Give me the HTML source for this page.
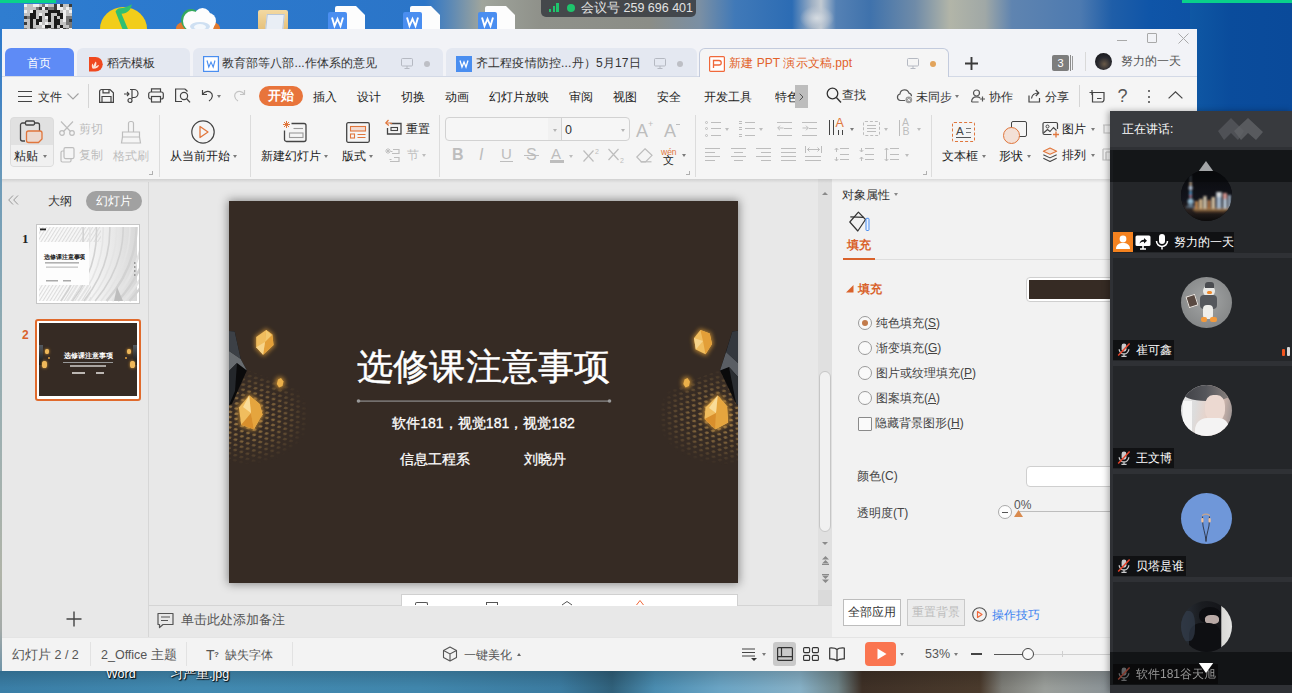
<!DOCTYPE html>
<html lang="zh">
<head>
<meta charset="utf-8">
<title>WPS</title>
<style>
*{box-sizing:border-box;margin:0;padding:0}
html,body{width:1292px;height:693px;overflow:hidden}
body{font-family:"Liberation Sans",sans-serif;font-size:12px;color:#333;position:relative;background:linear-gradient(180deg,#2a76c8 0,#2a6fb8 40%,#3d7aa8 75%,#4a86a8 100%)}
.a{position:absolute}
.t{position:absolute;white-space:nowrap;line-height:16px}
svg{position:absolute;overflow:visible}
#desk-top{left:0;top:0;width:1292px;height:30px;background:linear-gradient(90deg,#2f7dd0 0,#2c7ace 130px,#2b75c8 425px,#5f8ab4 452px,#a0a59c 482px,#8f918a 540px,#8b8d87 650px,#7a8fa4 700px,#4079b8 735px,#2c6cb4 792px,#9fb0c4 812px,#c2cad2 821px,#5581b4 836px,#3f72ac 870px,#6f8ba8 915px,#b2b5a8 950px,#a0a8a6 985px,#5f84b0 1012px,#4d7ab0 1080px,#1f5ea8 1112px,#0f55a8 1150px,#0a4a9c 1292px)}
#desk-bot{left:0;top:660px;width:1292px;height:33px;background:linear-gradient(180deg,rgba(0,0,0,.16) 10px,rgba(0,0,0,0) 28px),linear-gradient(90deg,#3a7ea6 0,#4189b0 200px,#4086ac 420px,#3b7ba0 560px,#30607a 612px,#4a8cb0 655px,#6aa4c4 720px,#86b0c6 800px,#6f8488 838px,#3e3026 862px,#4a3a2c 980px,#7c7c76 1002px,#9a9e9a 1045px,#8a9296 1110px)}
#win{left:2px;top:29px;width:1195px;height:642px;background:#f5f5f5;z-index:0}
#titlebar{left:0;top:0;width:1195px;height:48px;background:#f2f3f7}
#tabline{left:0;top:47px;width:1195px;height:1px;background:#d3d9e6;z-index:1}
#menurow{left:0;top:47px;width:1195px;height:36px;background:#f5f5f5}
#ribbon{left:0;top:83px;width:1195px;height:67px;background:#f5f5f5}
#ribline{left:0;top:150px;width:1195px;height:4px;background:linear-gradient(180deg,rgba(0,0,0,.1),rgba(0,0,0,0));z-index:2}
#leftp{left:0;top:150px;width:147px;height:458px;background:#e8e8e8}
#leftdiv{left:146px;top:153px;width:1px;height:455px;background:#d6d6d6}
#editor{left:147px;top:150px;width:669px;height:426px;background:#e8e8e8}
#vscroll{left:816px;top:150px;width:14px;height:426px;background:#e0e0e0}
#rightp{left:830px;top:150px;width:365px;height:458px;background:#f2f2f2}
#notes{left:147px;top:576px;width:683px;height:32px;background:#e8e8e8;border-top:1px solid #d4d4d4}
#status{left:0;top:608px;width:1195px;height:34px;background:#f3f3f3;border-top:1px solid #e4e4e4}
#meet{left:1110px;top:111px;width:182px;height:582px;background:#2b2d31}

#slide{left:227px;top:172px;width:509px;height:382px;background:#362b24;box-shadow:0 0 9px 1px rgba(0,0,0,.42);overflow:hidden}
#slide .w{color:#fff;position:absolute;white-space:nowrap;text-align:center}
#stitle{left:127.500px;width:254px;top:142px;font-size:36.3px;line-height:48px;-webkit-text-stroke:.45px #fff;display:flex;justify-content:space-between}
#stitle span{display:block;width:36.3px;text-align:center;flex:none}
#ssub{left:0;width:509px;top:212px;font-size:14px;line-height:20px;letter-spacing:.05px;-webkit-text-stroke:.3px #fff}

#meet{z-index:2;background:#2f3135;box-shadow:-2px 0 6px rgba(0,0,0,.3)}
#mhead{left:0;top:0;width:182px;height:36px;background:#383a3e}
.tile{position:absolute;left:3px;width:179px;height:103px;background:#242629}
.av{position:absolute;left:67.500px;top:19.500px;width:51px;height:51px;border-radius:50%;overflow:hidden}
.lab{position:absolute;left:0;top:82.500px;height:20px;background:#101113;color:#fff;font-size:12px;line-height:21px;padding-left:23px;padding-right:2px;white-space:nowrap}
.lab svg{left:3px;top:2px}

#ui{left:0;top:0;width:1292px;height:693px;z-index:1}
.tab{position:absolute;top:48px;height:28px;background:#e4e8f1;border-radius:6px 6px 0 0}
.g{color:#b9b9b9}
.ar{position:absolute;width:0;height:0;border-left:2.6px solid transparent;border-right:2.6px solid transparent;border-top:3.2px solid #7a7a7a}
.sep{position:absolute;width:1px;background:#dcdcdc}
</style>
</head>
<body>
<div class="a" id="desk-top"></div>
<div class="a" id="desk-bot"></div>
<div class="a" style="left:800px;top:6px;width:34px;height:22px;background:radial-gradient(ellipse at 50% 55%,rgba(214,220,226,.95) 0,rgba(190,200,212,.6) 40%,rgba(120,150,190,0) 72%)"></div>
<div class="a" style="left:0;top:29px;width:3px;height:642px;background:linear-gradient(180deg,#2b78cc 0,#3f82c4 60px,#6f9cb8 160px,#8eaab2 290px,#9fb0b0 420px,#b0b4a8 545px,#a4aaa8 600px,#6f94a8 642px)"></div>
<div class="a" style="left:1190px;top:0;width:102px;height:120px;background:linear-gradient(90deg,#0f58a4,#0a4c9c 40%,#0a4a9a)"></div>

<div class="a" id="deskitems" style="left:0;top:0;width:1292px;height:693px">
  <div class="a" style="left:0;top:0;width:56px;height:3px;background:#0ad18a"></div>
  <div class="a" style="left:1182px;top:0;width:110px;height:3px;background:#0ad18a"></div>
  <div class="a" style="left:541px;top:0;width:155px;height:17px;background:rgba(58,62,66,.88);border-radius:0 0 5px 5px"></div>
  <div class="a" style="left:549px;top:9px;width:2px;height:3px;background:#1ec46c"></div><div class="a" style="left:552.500px;top:6px;width:2px;height:6px;background:#1ec46c"></div><div class="a" style="left:556px;top:3px;width:2.500px;height:9px;background:#1ec46c"></div>
  <div class="a" style="left:567px;top:4px;width:8px;height:8px;border-radius:50%;background:#1ec46c"></div>
  <div class="t" style="left:581px;top:0;color:#e2e2e2;font-size:12.500px">会议号 259 696 401</div>
  <div class="a" style="left:24px;top:4px;width:48px;height:25px;background:#c2c2c2"></div><div class="a" style="left:24px;top:4px;width:3px;height:3px;background:#efefef"></div><div class="a" style="left:33px;top:4px;width:3px;height:3px;background:#efefef"></div><div class="a" style="left:36px;top:4px;width:3px;height:3px;background:#efefef"></div><div class="a" style="left:42px;top:4px;width:3px;height:3px;background:#777"></div><div class="a" style="left:45px;top:4px;width:3px;height:3px;background:#efefef"></div><div class="a" style="left:54px;top:4px;width:3px;height:3px;background:#3c3c3c"></div><div class="a" style="left:57px;top:4px;width:3px;height:3px;background:#efefef"></div><div class="a" style="left:60px;top:4px;width:3px;height:3px;background:#3c3c3c"></div><div class="a" style="left:69px;top:4px;width:3px;height:3px;background:#3c3c3c"></div><div class="a" style="left:36px;top:7px;width:3px;height:3px;background:#777"></div><div class="a" style="left:39px;top:7px;width:3px;height:3px;background:#3c3c3c"></div><div class="a" style="left:42px;top:7px;width:3px;height:3px;background:#efefef"></div><div class="a" style="left:45px;top:7px;width:3px;height:3px;background:#3c3c3c"></div><div class="a" style="left:48px;top:7px;width:3px;height:3px;background:#777"></div><div class="a" style="left:51px;top:7px;width:3px;height:3px;background:#777"></div><div class="a" style="left:54px;top:7px;width:3px;height:3px;background:#3c3c3c"></div><div class="a" style="left:57px;top:7px;width:3px;height:3px;background:#efefef"></div><div class="a" style="left:60px;top:7px;width:3px;height:3px;background:#efefef"></div><div class="a" style="left:66px;top:7px;width:3px;height:3px;background:#efefef"></div><div class="a" style="left:24px;top:10px;width:3px;height:3px;background:#efefef"></div><div class="a" style="left:30px;top:10px;width:3px;height:3px;background:#efefef"></div><div class="a" style="left:33px;top:10px;width:3px;height:3px;background:#1a1a1a"></div><div class="a" style="left:48px;top:10px;width:3px;height:3px;background:#1a1a1a"></div><div class="a" style="left:51px;top:10px;width:3px;height:3px;background:#1a1a1a"></div><div class="a" style="left:54px;top:10px;width:3px;height:3px;background:#1a1a1a"></div><div class="a" style="left:57px;top:10px;width:3px;height:3px;background:#1a1a1a"></div><div class="a" style="left:63px;top:10px;width:3px;height:3px;background:#efefef"></div><div class="a" style="left:69px;top:10px;width:3px;height:3px;background:#efefef"></div><div class="a" style="left:30px;top:13px;width:3px;height:3px;background:#1a1a1a"></div><div class="a" style="left:33px;top:13px;width:3px;height:3px;background:#1a1a1a"></div><div class="a" style="left:39px;top:13px;width:3px;height:3px;background:#efefef"></div><div class="a" style="left:45px;top:13px;width:3px;height:3px;background:#1a1a1a"></div><div class="a" style="left:48px;top:13px;width:3px;height:3px;background:#1a1a1a"></div><div class="a" style="left:57px;top:13px;width:3px;height:3px;background:#1a1a1a"></div><div class="a" style="left:60px;top:13px;width:3px;height:3px;background:#1a1a1a"></div><div class="a" style="left:63px;top:13px;width:3px;height:3px;background:#efefef"></div><div class="a" style="left:24px;top:16px;width:3px;height:3px;background:#3c3c3c"></div><div class="a" style="left:27px;top:16px;width:3px;height:3px;background:#777"></div><div class="a" style="left:30px;top:16px;width:3px;height:3px;background:#1a1a1a"></div><div class="a" style="left:33px;top:16px;width:3px;height:3px;background:#1a1a1a"></div><div class="a" style="left:39px;top:16px;width:3px;height:3px;background:#1a1a1a"></div><div class="a" style="left:45px;top:16px;width:3px;height:3px;background:#efefef"></div><div class="a" style="left:48px;top:16px;width:3px;height:3px;background:#1a1a1a"></div><div class="a" style="left:54px;top:16px;width:3px;height:3px;background:#1a1a1a"></div><div class="a" style="left:60px;top:16px;width:3px;height:3px;background:#1a1a1a"></div><div class="a" style="left:63px;top:16px;width:3px;height:3px;background:#efefef"></div><div class="a" style="left:66px;top:16px;width:3px;height:3px;background:#777"></div><div class="a" style="left:69px;top:16px;width:3px;height:3px;background:#777"></div><div class="a" style="left:30px;top:19px;width:3px;height:3px;background:#1a1a1a"></div><div class="a" style="left:36px;top:19px;width:3px;height:3px;background:#1a1a1a"></div><div class="a" style="left:39px;top:19px;width:3px;height:3px;background:#1a1a1a"></div><div class="a" style="left:48px;top:19px;width:3px;height:3px;background:#1a1a1a"></div><div class="a" style="left:54px;top:19px;width:3px;height:3px;background:#1a1a1a"></div><div class="a" style="left:57px;top:19px;width:3px;height:3px;background:#1a1a1a"></div><div class="a" style="left:63px;top:19px;width:3px;height:3px;background:#efefef"></div><div class="a" style="left:66px;top:19px;width:3px;height:3px;background:#777"></div><div class="a" style="left:69px;top:19px;width:3px;height:3px;background:#3c3c3c"></div><div class="a" style="left:24px;top:22px;width:3px;height:3px;background:#3c3c3c"></div><div class="a" style="left:30px;top:22px;width:3px;height:3px;background:#1a1a1a"></div><div class="a" style="left:36px;top:22px;width:3px;height:3px;background:#1a1a1a"></div><div class="a" style="left:39px;top:22px;width:3px;height:3px;background:#efefef"></div><div class="a" style="left:45px;top:22px;width:3px;height:3px;background:#efefef"></div><div class="a" style="left:54px;top:22px;width:3px;height:3px;background:#1a1a1a"></div><div class="a" style="left:57px;top:22px;width:3px;height:3px;background:#1a1a1a"></div><div class="a" style="left:66px;top:22px;width:3px;height:3px;background:#777"></div><div class="a" style="left:69px;top:22px;width:3px;height:3px;background:#777"></div><div class="a" style="left:30px;top:25px;width:3px;height:3px;background:#1a1a1a"></div><div class="a" style="left:42px;top:25px;width:3px;height:3px;background:#efefef"></div><div class="a" style="left:45px;top:25px;width:3px;height:3px;background:#1a1a1a"></div><div class="a" style="left:48px;top:25px;width:3px;height:3px;background:#1a1a1a"></div><div class="a" style="left:54px;top:25px;width:3px;height:3px;background:#1a1a1a"></div><div class="a" style="left:60px;top:25px;width:3px;height:3px;background:#1a1a1a"></div><div class="a" style="left:69px;top:25px;width:3px;height:3px;background:#777"></div><div class="a" style="left:24px;top:28px;width:3px;height:3px;background:#777"></div><div class="a" style="left:30px;top:28px;width:3px;height:3px;background:#3c3c3c"></div><div class="a" style="left:33px;top:28px;width:3px;height:3px;background:#777"></div><div class="a" style="left:45px;top:28px;width:3px;height:3px;background:#777"></div><div class="a" style="left:51px;top:28px;width:3px;height:3px;background:#777"></div><div class="a" style="left:54px;top:28px;width:3px;height:3px;background:#3c3c3c"></div><div class="a" style="left:57px;top:28px;width:3px;height:3px;background:#777"></div><div class="a" style="left:60px;top:28px;width:3px;height:3px;background:#efefef"></div><div class="a" style="left:63px;top:28px;width:3px;height:3px;background:#3c3c3c"></div><div class="a" style="left:66px;top:28px;width:3px;height:3px;background:#777"></div><div class="a" style="left:69px;top:28px;width:3px;height:3px;background:#efefef"></div>
  <div class="a" style="left:100px;top:7px;width:47px;height:44px;border-radius:50%;background:#f2cd1a"></div><svg width="22" height="26" viewBox="113 3 22 26" style="left:113px;top:3px"><path d="M115.500 11.500c1-2 2.500-3 4.500-3.300 3-.4 7-1 12-4-1 4-2.500 7-6 8.500-1.500.6-3 .9-4.500 1l6.500 15.500h-5.500z" fill="#2fbf71"/></svg>
  <div class="a" style="left:176px;top:19px;width:44px;height:18px;border-radius:50% 50% 0 0;background:#e07a30"></div><div class="a" style="left:183px;top:11px;width:18px;height:20px;border-radius:50%;background:#fdfdfd;box-shadow:-1px -1px 0 1px #35a85c"></div><div class="a" style="left:194px;top:8px;width:17px;height:18px;border-radius:50%;background:#fdfdfd"></div><div class="a" style="left:201px;top:13px;width:15px;height:16px;border-radius:50%;background:#fdfdfd"></div><div class="a" style="left:186px;top:18px;width:28px;height:14px;border-radius:40%;background:#fdfdfd"></div><div class="a" style="left:190px;top:22px;width:20px;height:9px;border-radius:50%;background:#cfe0f2"></div><div class="a" style="left:194px;top:24px;width:12px;height:6px;border-radius:50%;background:#f4f8fc"></div>
  <div class="a" style="left:258px;top:10px;width:30px;height:20px;background:linear-gradient(180deg,#f3d9a2,#e5c07a);border-radius:2px"></div><div class="a" style="left:266px;top:14px;width:18px;height:16px;background:#e9eef5;border:1px solid #b9c6d8;transform:skewX(-6deg)"></div>
  <div class="a" style="left:335px;top:6px;width:30px;height:24px;background:#fdfdfd;border-radius:2px 0 0 0;clip-path:polygon(0 0,70% 0,100% 38%,100% 100%,0 100%)"></div><div class="a" style="left:328px;top:12px;width:19px;height:18px;background:#4a8ef0;border-radius:2px 2px 0 0"></div><svg width="13" height="10" viewBox="0 0 13 10" style="left:331px;top:17px"><path d="M1 .5l2.500 8.500 3-7 3 7L12 .5" fill="none" stroke="#fff" stroke-width="1.900"/></svg>
  <div class="a" style="left:410px;top:6px;width:30px;height:24px;background:#fdfdfd;border-radius:2px 0 0 0;clip-path:polygon(0 0,70% 0,100% 38%,100% 100%,0 100%)"></div><div class="a" style="left:403px;top:12px;width:19px;height:18px;background:#4a8ef0;border-radius:2px 2px 0 0"></div><svg width="13" height="10" viewBox="0 0 13 10" style="left:406px;top:17px"><path d="M1 .5l2.500 8.500 3-7 3 7L12 .5" fill="none" stroke="#fff" stroke-width="1.900"/></svg>
  <div class="a" style="left:485px;top:6px;width:30px;height:24px;background:#fdfdfd;border-radius:2px 0 0 0;clip-path:polygon(0 0,70% 0,100% 38%,100% 100%,0 100%)"></div><div class="a" style="left:478px;top:12px;width:19px;height:18px;background:#4a8ef0;border-radius:2px 2px 0 0"></div><svg width="13" height="10" viewBox="0 0 13 10" style="left:481px;top:17px"><path d="M1 .5l2.500 8.500 3-7 3 7L12 .5" fill="none" stroke="#fff" stroke-width="1.900"/></svg>
  <div class="t" style="left:106px;top:666px;color:#fff;font-size:12.500px;text-shadow:1px 1px 1px #000,0 0 2px #000">Word</div>
  <div class="t" style="left:170px;top:666px;color:#fff;font-size:12.500px;text-shadow:1px 1px 1px #000,0 0 2px #000">习严重.jpg</div>
</div>

<div class="a" id="win">
  <div class="a" id="titlebar"></div>
  <div class="a" id="tabline"></div>
  <div class="a" id="menurow"></div>
  <div class="a" id="ribbon"></div>
  <div class="a" id="ribline"></div>
  <div class="a" id="leftp"></div>
  <div class="a" id="leftdiv"></div>
  <div class="a" id="editor"></div>
  
  <div class="a" id="slide">
    <svg width="509" height="382" viewBox="0 0 509 382" style="left:0;top:0">
      <defs>
        <pattern id="dots" width="6.4" height="10" patternUnits="userSpaceOnUse" patternTransform="rotate(17) skewX(-20)">
          <ellipse cx="1.6" cy="1.4" rx="1.95" ry="1.3" fill="#b0894c"/>
          <ellipse cx="4.8" cy="6.4" rx="1.95" ry="1.3" fill="#b0894c"/>
        </pattern>
        <pattern id="dots2" width="6.4" height="10" patternUnits="userSpaceOnUse" patternTransform="rotate(-17) skewX(20)">
          <ellipse cx="1.6" cy="1.4" rx="1.95" ry="1.3" fill="#b0894c"/>
          <ellipse cx="4.8" cy="6.4" rx="1.95" ry="1.3" fill="#b0894c"/>
        </pattern>
        <radialGradient id="fadeL" cx="16" cy="216" r="68" gradientUnits="userSpaceOnUse" gradientTransform="translate(16 216) scale(1 .74) translate(-16 -216)">
          <stop offset="0" stop-color="#fff" stop-opacity=".9"/><stop offset=".5" stop-color="#fff" stop-opacity=".55"/><stop offset=".95" stop-color="#fff" stop-opacity="0"/>
        </radialGradient>
        <radialGradient id="fadeR" cx="493" cy="216" r="68" gradientUnits="userSpaceOnUse" gradientTransform="translate(493 216) scale(1 .74) translate(-493 -216)">
          <stop offset="0" stop-color="#fff" stop-opacity=".9"/><stop offset=".5" stop-color="#fff" stop-opacity=".55"/><stop offset=".95" stop-color="#fff" stop-opacity="0"/>
        </radialGradient>
        <mask id="mL"><polygon points="0,166 16,168 90,196 60,280 0,270" fill="url(#fadeL)"/></mask>
        <mask id="mR"><polygon points="509,166 493,168 419,196 449,280 509,270" fill="url(#fadeR)"/></mask>
        <filter id="glow" x="-50%" y="-50%" width="200%" height="200%"><feGaussianBlur stdDeviation="2.2"/></filter>
      </defs>
      <rect x="0" y="160" width="95" height="125" fill="url(#dots)" mask="url(#mL)"/>
      <rect x="414" y="160" width="95" height="125" fill="url(#dots2)" mask="url(#mR)"/>
      <!-- left crystal -->
      <polygon points="0,130 5.7,130.6 11.7,158 17.9,169.4 2.9,203 0,204" fill="#0a0a0b"/>
      <polygon points="0,130 5.7,130.6 11.7,158 0,150" fill="#3c4046"/>
      <polygon points="0,150 11.7,158 17.9,169.4 8,162 0,170" fill="#686c70"/>
      <polygon points="0,170 8,162 6,190 0,204" fill="#24272b"/>
      <!-- right crystal -->
      <polygon points="509,129.7 503.3,130.6 491,169.4 507.2,203 509,203.6" fill="#0a0a0b"/>
      <polygon points="509,129.7 503.3,130.6 497,151 509,162" fill="#34383e"/>
      <polygon points="497,151 509,162 509,176 500,166 491,169.4" fill="#5a5e64"/>
      <polygon points="500,166 509,176 509,203.6 507.2,203" fill="#2a2d31"/>
      <!-- gems glow -->
      <g filter="url(#glow)" fill="#d99a35" opacity=".75">
        <polygon points="26,135.5 37,127.5 44.5,133 46,144.5 34.5,155.5 26,147"/>
        <ellipse cx="51" cy="181.7" rx="5" ry="6"/>
        <polygon points="8.5,206 20,192.5 32,202 35,213.5 25.5,230 11,225"/>
        <polygon points="463.5,137 471,127.5 482,131.5 484.5,143 477,155 465.5,149.5"/>
        <ellipse cx="457.6" cy="181.7" rx="5" ry="6"/>
        <polygon points="475,206 488.7,192.5 499.5,204.5 500.5,222 486.5,230 474,218.5"/>
      </g>
      <!-- gems -->
      <polygon points="27.2,135.9 37.1,129 43.3,133.6 44.5,144 34.1,153.7 27.2,146.3" fill="#f0bd5e"/>
      <polygon points="37.1,129 43.3,133.6 44.5,144 34.1,153.7 36,141" fill="#e39f38"/>
      <polygon points="27.2,146.3 36,141 34.1,153.7" fill="#f7d48a"/>
      <polygon points="36,141 43,134 37.1,129" fill="#f3c86e"/>
      <polygon points="49,178.5 52,177 54.5,180.5 53.5,185 50,186.5 47.8,183" fill="#eab04a"/>
      <polygon points="9.9,206.4 20.2,194.4 30.6,202.9 33.4,213.3 24.9,228.3 12.2,223.7" fill="#f0bd5e"/>
      <polygon points="20.2,194.4 30.6,202.9 33.4,213.3 24.9,228.3 22,212" fill="#e5a53e"/>
      <polygon points="20.2,194.4 22,212 14,206" fill="#f9dc98"/>
      <polygon points="12.2,223.7 22,212 24.9,228.3" fill="#d98f2c"/>
      <polygon points="465,137.1 471.4,129 480.7,132.5 483,142.9 476.5,153.3 466.8,148.6" fill="#f0bd5e"/>
      <polygon points="471.4,129 480.7,132.5 483,142.9 476.5,153.3 474,140" fill="#e39f38"/>
      <polygon points="465,137.1 474,140 466.8,148.6" fill="#f7d48a"/>
      <polygon points="455.5,178.5 458.5,177 461,180.5 460,185 456.5,186.5 454.3,183" fill="#eab04a"/>
      <polygon points="476.5,206.4 488.7,194.4 498,205.2 499.1,221.4 486.4,228.3 475.6,217.9" fill="#f0bd5e"/>
      <polygon points="488.7,194.4 498,205.2 499.1,221.4 486.4,228.3 487,212" fill="#e5a53e"/>
      <polygon points="488.7,194.4 487,212 480,207" fill="#f9dc98"/>
      <polygon points="475.6,217.9 487,212 486.4,228.3" fill="#d98f2c"/>
      <!-- divider -->
      <rect x="129" y="199.5" width="252" height="1.2" fill="#8e8e8e"/>
      <circle cx="129.5" cy="200" r="1.8" fill="#9a9a9a"/><circle cx="380.5" cy="200" r="1.8" fill="#9a9a9a"/>
    </svg>
    <div class="w" id="stitle"><span>选</span><span>修</span><span>课</span><span>注</span><span>意</span><span>事</span><span>项</span></div>
    <div class="w" id="ssub">软件181，视觉181，视觉182</div>
    <div class="w" style="left:171px;top:248px;font-size:14px;line-height:20px;-webkit-text-stroke:.25px #fff">信息工程系</div>
    <div class="w" style="left:295px;top:248px;font-size:14px;line-height:20px;-webkit-text-stroke:.25px #fff">刘晓丹</div>
  </div>
  <div class="a" id="vscroll"></div>
  <div class="a" id="rightp"></div>
  <div class="a" id="notes"></div>
  <div class="a" id="status"></div>
</div>



<div class="a" id="ui">
  <!-- window controls -->
  <div class="a" style="left:1117px;top:40px;width:10px;height:1px;background:#a9a9a9"></div>
  <div class="a" style="left:1147px;top:33px;width:10px;height:10px;border:1px solid #a9a9a9;border-radius:1px"></div>
  <svg width="11" height="11" viewBox="0 0 11 11" style="left:1178px;top:33px"><path d="M.5.5l10 10M10.500.5l-10 10" stroke="#a9a9a9" stroke-width="1"/></svg>
  <!-- tabs -->
  <div class="tab" style="left:5px;width:69px;background:#5e8bf6"></div>
  <div class="t" style="left:27px;top:55px;color:#fff">首页</div>
  <div class="tab" style="left:77px;width:113px"></div>
  <svg width="14" height="15" viewBox="0 0 14 15" style="left:89px;top:57px"><path d="M0 0h6.500a7 7 0 0 1 0 14.500H0z" fill="#f0491f"/><path d="M3.800 11.800c-1.300-1.800-1.300-3.800-.4-5.300.9.900 1.300 2 1.200 3.300.2-2.300.9-4 2.300-5.300.9 1.600.6 3.800-.6 5.600 1-1.300 2.300-2 3.700-2.200-.3 2.200-2.300 3.900-6.200 3.900z" fill="#fde3d6"/></svg>
  <div class="t" style="left:107px;top:55px">稻壳模板</div>
  <div class="tab" style="left:193px;width:250px"></div>
  <svg width="16" height="16" viewBox="0 0 16 16" style="left:203px;top:56px"><rect x=".6" y=".6" width="14.800" height="14.800" fill="#fff" stroke="#4a8ef0" stroke-width="1.200"/><path d="M4 4.500l1.800 6.500 2.200-5 2.200 5L12 4.500" fill="none" stroke="#4a8ef0" stroke-width="1.100"/></svg>
  <div class="t" style="left:222px;top:55px;letter-spacing:.08px">教育部等八部...作体系的意见</div>
  <svg width="12" height="11" viewBox="0 0 12 11" style="left:401px;top:58px"><rect x=".5" y=".5" width="11" height="7.500" rx="1" fill="none" stroke="#b5b9c2"/><path d="M6 8v2.500M3.500 10.500h5" stroke="#b5b9c2" fill="none"/></svg>
  <div class="a" style="left:424px;top:61px;width:6px;height:6px;border-radius:50%;background:#bdbfc5"></div>
  <div class="tab" style="left:446px;width:251px"></div>
  <svg width="16" height="16" viewBox="0 0 16 16" style="left:456px;top:56px"><rect width="16" height="16" fill="#4a8ef0"/><path d="M4 4.500l2 6.500 2-5 2 5 2-6.500" fill="none" stroke="#fff" stroke-width="1.300"/></svg>
  <div class="t" style="left:476px;top:55px;letter-spacing:.16px">齐工程疫情防控...丹）5月17日</div>
  <svg width="12" height="11" viewBox="0 0 12 11" style="left:654px;top:58px"><rect x=".5" y=".5" width="11" height="7.500" rx="1" fill="none" stroke="#b5b9c2"/><path d="M6 8v2.500M3.500 10.500h5" stroke="#b5b9c2" fill="none"/></svg>
  <div class="a" style="left:677px;top:61px;width:6px;height:6px;border-radius:50%;background:#bdbfc5"></div>
  <div class="tab" style="left:699px;width:250px;height:29px;background:#f5f5f5;border:1px solid #c3cbdd;border-bottom:none"></div>
  <svg width="16" height="16" viewBox="0 0 16 16" style="left:709px;top:56px"><rect x=".6" y=".6" width="14.800" height="14.800" rx="1" fill="#fff" stroke="#f0683a" stroke-width="1.200"/><path d="M4.500 12V4.500h5.500a2 2 0 0 1 0 4.500H4.500" fill="none" stroke="#f0683a" stroke-width="1.300"/></svg>
  <div class="t" style="left:729px;top:55px;color:#e2622a;font-size:12px;letter-spacing:.1px">新建 PPT 演示文稿.ppt</div>
  <svg width="12" height="11" viewBox="0 0 12 11" style="left:907px;top:58px"><rect x=".5" y=".5" width="11" height="7.500" rx="1" fill="none" stroke="#b5b9c2"/><path d="M6 8v2.500M3.500 10.500h5" stroke="#b5b9c2" fill="none"/></svg>
  <div class="a" style="left:930px;top:61px;width:6px;height:6px;border-radius:50%;background:#e2a45c"></div>
  <svg width="13" height="13" viewBox="0 0 13 13" style="left:965px;top:56.500px"><path d="M6.500 0v13M0 6.500h13" stroke="#3a3a3a" stroke-width="1.900"/></svg>
  <div class="a" style="left:1052px;top:55px;width:17px;height:16px;background:#7d7d7d;border-radius:2px;color:#fff;font-size:11px;line-height:16px;text-align:center">3</div>
  <div class="a" style="left:1070px;top:55px;width:1px;height:16px;background:#8a8a8a"></div>
  <div class="a" style="left:1072px;top:56px;width:1px;height:14px;background:#9a9a9a"></div>
  <div class="sep" style="left:1085px;top:52px;height:19px;background:#d9d9d9"></div>
  <div class="a" style="left:1095px;top:53px;width:17px;height:17px;border-radius:50%;background:radial-gradient(circle at 55% 65%,#6a5a48 0,#2a2a30 45%,#0c0d10 100%)"></div>
  <div class="t" style="left:1121px;top:53px;color:#555">努力的一天</div>

  <!-- menu row -->
  <div class="a" style="left:18px;top:90.5px;width:14px;height:1.2px;background:#444"></div>
  <div class="a" style="left:18px;top:95.5px;width:14px;height:1.2px;background:#444"></div>
  <div class="a" style="left:18px;top:100.5px;width:14px;height:1.2px;background:#444"></div>
  <div class="t" style="left:38px;top:89px;">文件</div>
  <svg width="12" height="7" viewBox="0 0 12 7" style="left:67px;top:93px"><path d="M.5.5l5.500 5.500 5.500-5.500" fill="none" stroke="#a2a2a2" stroke-width="1.100"/></svg>
  <div class="sep" style="left:88px;top:84px;height:24px;background:#d5d5d5"></div>
  <svg width="15" height="14" viewBox="0 0 15 14" style="left:99px;top:89px"><path d="M.6 2.500a2 2 0 0 1 2-2h8.400l3.400 3.200v9.700H.6z" fill="none" stroke="#444" stroke-width="1.200"/><path d="M3 13V7.500h9V13M4 .8v3h6V.8" fill="none" stroke="#444" stroke-width="1.200"/></svg>
  <svg width="15" height="16" viewBox="0 0 15 16" style="left:124px;top:88px"><path d="M6 1.500h4a4 4 0 0 1 0 8H8" fill="none" stroke="#444" stroke-width="1.200"/><path d="M8 1.500v9.500" stroke="#444" stroke-width="1.200"/><circle cx="6" cy="12.500" r="2" fill="none" stroke="#444" stroke-width="1.200"/><path d="M0 6h5M3 4l2 2-2 2" fill="none" stroke="#444" stroke-width="1.100"/></svg>
  <svg width="16" height="15" viewBox="0 0 16 15" style="left:148px;top:88px"><path d="M3.500 4V.8h9V4" fill="none" stroke="#444" stroke-width="1.200"/><rect x=".7" y="4" width="14.600" height="7" rx="2" fill="none" stroke="#444" stroke-width="1.200"/><rect x="3.500" y="8.500" width="9" height="5.500" fill="#f5f5f5" stroke="#444" stroke-width="1.200"/></svg>
  <svg width="17" height="16" viewBox="0 0 17 16" style="left:174px;top:88px"><path d="M11 1H1.600v12.500H8" fill="none" stroke="#444" stroke-width="1.200"/><path d="M11 1l2.500 2.500" stroke="#444" stroke-width="1.200"/><circle cx="10" cy="8" r="3.600" fill="none" stroke="#444" stroke-width="1.200"/><path d="M12.700 10.800l3.300 3.600" stroke="#444" stroke-width="1.300"/></svg>
  <svg width="13" height="13" viewBox="0 0 13 13" style="left:201px;top:89px"><path d="M1.500 1v4.500h4.500" fill="none" stroke="#444" stroke-width="1.200"/><path d="M1.800 5.200C3.500 2.500 7 1.500 9.500 3.200c2.600 1.800 2.800 6-1.500 8.800" fill="none" stroke="#444" stroke-width="1.200"/></svg>
  <div class="ar" style="left:217px;top:94.5px"></div>
  <svg width="13" height="13" viewBox="0 0 13 13" style="left:233px;top:89px"><path d="M11.500 1v4.500H7" fill="none" stroke="#c4c4c4" stroke-width="1.200"/><path d="M11.200 5.200C9.500 2.500 6 1.500 3.500 3.200.9 5 .7 9.200 5 12" fill="none" stroke="#c4c4c4" stroke-width="1.200"/></svg>
  <div class="a" style="left:259px;top:86px;width:44px;height:20px;border-radius:10px;background:#e8743b;color:#fff;font-weight:bold;font-size:12.500px;line-height:20px;text-align:center">开始</div>
  <div class="t" style="left:313px;top:89px;color:#222">插入</div>
  <div class="t" style="left:357px;top:89px;color:#222">设计</div>
  <div class="t" style="left:401px;top:89px;color:#222">切换</div>
  <div class="t" style="left:445px;top:89px;color:#222">动画</div>
  <div class="t" style="left:489px;top:89px;color:#222">幻灯片放映</div>
  <div class="t" style="left:569px;top:89px;color:#222">审阅</div>
  <div class="t" style="left:613px;top:89px;color:#222">视图</div>
  <div class="t" style="left:657px;top:89px;color:#222">安全</div>
  <div class="t" style="left:704px;top:89px;color:#222">开发工具</div>
  <div class="t" style="left:775px;top:89px;color:#222;width:20px;overflow:hidden">特色</div>
  <div class="a" style="left:795px;top:85px;width:13px;height:23px;background:#bdbdbd"></div>
  <svg width="5" height="8" viewBox="0 0 5 8" style="left:799px;top:92.500px"><path d="M.7.700l3.300 3.300-3.300 3.300" fill="none" stroke="#555" stroke-width="1"/></svg>
  <svg width="16" height="16" viewBox="0 0 16 16" style="left:826px;top:87px"><circle cx="6.500" cy="6.500" r="5.300" fill="none" stroke="#333" stroke-width="1.300"/><path d="M10.400 10.600l4.600 4.800" stroke="#333" stroke-width="1.400"/></svg>
  <div class="t" style="left:842px;top:87px;">查找</div>
  <svg width="18" height="15" viewBox="0 0 18 15" style="left:896px;top:89px"><path d="M9 11.500H4.500a3.300 3.300 0 0 1-.5-6.500 4.600 4.600 0 0 1 9-.8 3.200 3.200 0 0 1 2.500 3" fill="none" stroke="#555" stroke-width="1.200"/><circle cx="12.800" cy="10.800" r="3.400" fill="#9a9a9a"/><path d="M11.500 9.500l2.600 2.600M14.100 9.500l-2.600 2.600" stroke="#f5f5f5" stroke-width="1"/></svg>
  <div class="t" style="left:916px;top:89px;">未同步</div>
  <div class="ar" style="left:955px;top:94.5px"></div>
  <svg width="15" height="14" viewBox="0 0 15 14" style="left:971px;top:89px"><circle cx="5.500" cy="4" r="3" fill="none" stroke="#555" stroke-width="1.200"/><path d="M.6 13c0-3.500 2-5.200 5-5.200 1.500 0 2.700.4 3.500 1.200M.6 13h7" fill="none" stroke="#555" stroke-width="1.200"/><path d="M11.500 7.500v5M9 10h5" stroke="#555" stroke-width="1.200"/></svg>
  <div class="t" style="left:989px;top:89px;">协作</div>
  <svg width="16" height="14" viewBox="0 0 16 14" style="left:1026px;top:89px"><path d="M3 6.500V13h10.500V9" fill="none" stroke="#444" stroke-width="1.200"/><path d="M5.500 9.500c.5-3.500 3-5.500 7-5.500M9.800 1l3 3-3 3" fill="none" stroke="#444" stroke-width="1.200"/></svg>
  <div class="t" style="left:1045px;top:89px;">分享</div>
  <div class="sep" style="left:1079px;top:85px;height:22px;background:#d5d5d5"></div>
  <svg width="16" height="14" viewBox="0 0 16 14" style="left:1089px;top:89px"><path d="M3.500 3.500h11.500v7c0 1.500-1 2.500-2.500 2.500H3.500z" fill="none" stroke="#444" stroke-width="1.200"/><path d="M.5 3.500h5M3 1v5M8 9.500h4.500" stroke="#444" stroke-width="1.200" fill="none"/></svg>
  <div class="t" style="left:1117.500px;top:85px;font-size:18px;line-height:22px;color:#555">?</div>
  <div class="a" style="left:1148px;top:90px;width:2px;height:2px;background:#444;border-radius:50%"></div>
  <div class="a" style="left:1148px;top:95.5px;width:2px;height:2px;background:#444;border-radius:50%"></div>
  <div class="a" style="left:1148px;top:101px;width:2px;height:2px;background:#444;border-radius:50%"></div>
  <svg width="15" height="8" viewBox="0 0 15 8" style="left:1168px;top:91px"><path d="M.6 7.400L7.500.8l6.900 6.600" fill="none" stroke="#444" stroke-width="1.200"/></svg>

  <!-- ribbon -->
  <div class="a" style="left:10px;top:117px;width:44px;height:50px;background:#e1e1e1;border:1px solid #dcdcdc;border-radius:4px"></div>
  <div class="a" style="left:11px;top:145px;width:42px;height:21px;background:#f0f0f0;border-radius:0 0 3px 3px"></div>
  <svg width="24" height="24" viewBox="0 0 24 24" style="left:19px;top:120px"><path d="M6.500 3H3.500a2 2 0 0 0-2 2v14a2 2 0 0 0 2 2H6" fill="none" stroke="#444" stroke-width="1.300"/><path d="M15.500 3h3a2 2 0 0 1 2 2v6" fill="none" stroke="#444" stroke-width="1.300"/><rect x="6.500" y="1" width="9" height="4" rx="1.200" fill="#e1e1e1" stroke="#444" stroke-width="1.300"/><path d="M7.500 13a2 2 0 0 1 2-2h11.500a2 2 0 0 1 2 2v6l-3.500 3.500H9.500a2 2 0 0 1-2-2z" fill="#ecd9cf" stroke="#e0763c" stroke-width="1.300"/></svg>
  <div class="t" style="left:14px;top:148px;color:#222">粘贴</div>
  <div class="ar" style="left:43px;top:154.5px"></div>
  <svg width="16" height="15" viewBox="0 0 16 15" style="left:59px;top:121px"><path d="M2 .5l9.500 10M14 .5L4.500 10.500" stroke="#bdbdbd" stroke-width="1.200" fill="none"/><circle cx="3" cy="12" r="2.300" fill="none" stroke="#bdbdbd" stroke-width="1.200"/><circle cx="13" cy="12" r="2.300" fill="none" stroke="#bdbdbd" stroke-width="1.200"/></svg>
  <div class="t" style="left:79px;top:121px;color:#bdbdbd">剪切</div>
  <svg width="15" height="16" viewBox="0 0 15 16" style="left:60px;top:147px"><rect x="4" y=".6" width="10" height="11" rx="1.500" fill="none" stroke="#bdbdbd" stroke-width="1.200"/><path d="M4 4H2.500a1.500 1.500 0 0 0-1.500 1.500v8A1.500 1.500 0 0 0 2.500 15h7a1.500 1.500 0 0 0 1.500-1.500v-2" fill="none" stroke="#bdbdbd" stroke-width="1.200"/></svg>
  <div class="t" style="left:79px;top:147px;color:#bdbdbd">复制</div>
  <svg width="22" height="23" viewBox="0 0 22 23" style="left:120px;top:121px"><path d="M8.500 11V2.500a2 2 0 0 1 2-2h1a2 2 0 0 1 2 2V11" fill="none" stroke="#bdbdbd" stroke-width="1.200"/><path d="M2.500 11h17v5h-17z" fill="none" stroke="#bdbdbd" stroke-width="1.200"/><path d="M2.500 16l-1 6h19l-1-6" fill="none" stroke="#bdbdbd" stroke-width="1.200"/></svg>
  <div class="t" style="left:113px;top:148px;color:#bdbdbd">格式刷</div>
  <div class="a" style="left:149px;top:171px;width:4px;height:4px;border-right:1px solid #b0b0b0;border-bottom:1px solid #b0b0b0"></div>
  <div class="sep" style="left:159px;top:115px;height:62px"></div>
  <svg width="24" height="24" viewBox="0 0 24 24" style="left:191px;top:120px"><circle cx="12" cy="12" r="11.200" fill="none" stroke="#444" stroke-width="1.200"/><path d="M9 6.500l8 5.500-8 5.500z" fill="none" stroke="#e0763c" stroke-width="1.300" stroke-linejoin="round"/></svg>
  <div class="t" style="left:170px;top:148px;color:#222">从当前开始</div>
  <div class="ar" style="left:233px;top:154.5px"></div>
  <div class="sep" style="left:250px;top:115px;height:62px"></div>
  <svg width="26" height="23" viewBox="0 0 26 23" style="left:282px;top:120px"><path d="M9.500 3.500H22a2 2 0 0 1 2 2v14a2 2 0 0 1-2 2H4.500a2 2 0 0 1-2-2V10.500" fill="none" stroke="#444" stroke-width="1.300"/><path d="M11.500 8.500h9.500" stroke="#9a9a9a" stroke-width="1.100"/><rect x="7.500" y="13" width="13.500" height="4.500" fill="none" stroke="#9a9a9a" stroke-width="1.100"/><path d="M4.500 1v7M1 4.500h7M2 2l5 5M7 2L2 7" stroke="#e0763c" stroke-width="1"/></svg>
  <div class="t" style="left:261px;top:148px;color:#222">新建幻灯片</div>
  <div class="ar" style="left:324px;top:154.5px"></div>
  <svg width="24" height="21" viewBox="0 0 24 21" style="left:346px;top:122px"><rect x=".7" y=".7" width="22.600" height="19.600" rx="1.500" fill="none" stroke="#444" stroke-width="1.300"/><rect x="4.500" y="4.500" width="15" height="4.500" fill="#f3ddd3" stroke="#e0763c" stroke-width="1.100"/><rect x="4.500" y="12" width="4" height="4" fill="none" stroke="#e0763c" stroke-width="1.100"/><path d="M11.500 12.500h8M11.500 15.500h8" stroke="#e0763c" stroke-width="1.100"/></svg>
  <div class="t" style="left:342px;top:148px;color:#222">版式</div>
  <div class="ar" style="left:369px;top:154.5px"></div>
  <svg width="17" height="15" viewBox="0 0 17 15" style="left:385px;top:120px"><path d="M5.500 3.500H16v10.500H2.500V8" fill="none" stroke="#444" stroke-width="1.300"/><rect x="6" y="7.500" width="6.500" height="3" fill="none" stroke="#444" stroke-width="1.100"/><path d="M3.500 0L.8 3l3 2.500" fill="none" stroke="#e0763c" stroke-width="1.200"/><path d="M1 3h4a2.500 2.500 0 0 1 2 1" fill="none" stroke="#e0763c" stroke-width="1.200"/></svg>
  <div class="t" style="left:406px;top:121px;color:#222">重置</div>
  <svg width="17" height="15" viewBox="0 0 17 15" style="left:385px;top:148px"><path d="M8 1.500h6v4H7M9 9.500h5v4H5" fill="none" stroke="#bdbdbd" stroke-width="1.200"/><path d="M5.500 3.500h2M4.500 11.500h2" stroke="#bdbdbd" stroke-width="1.200"/><path d="M3 0v6M0 3h6M1 1l4 4M5 1L1 5" stroke="#bdbdbd" stroke-width=".9"/></svg>
  <div class="t" style="left:406.500px;top:147px;color:#bdbdbd">节</div>
  <div class="ar" style="left:422px;top:153.5px;border-top-color:#bdbdbd"></div>
  <div class="sep" style="left:439px;top:115px;height:62px"></div>
  <div class="a" style="left:445px;top:117px;width:185px;height:24px;border:1px solid #d2d2d2;border-radius:4px;background:#f6f6f6"></div>
  <div class="a" style="left:548px;top:118px;width:13px;height:22px;background:#f1f1f1"></div>
  <div class="a" style="left:561px;top:118px;width:1px;height:22px;background:#d2d2d2"></div>
  <div class="ar" style="left:553px;top:128.5px;border-top-color:#b5b5b5"></div>
  <div class="t" style="left:565px;top:122px;color:#333;font-size:12.500px">0</div>
  <div class="ar" style="left:621px;top:128.5px;border-top-color:#b5b5b5"></div>
  <div class="t" style="left:636px;top:120px;font-size:18px;line-height:22px;color:#bdbdbd">A</div><div class="t" style="left:648px;top:119px;font-size:9px;line-height:10px;color:#bdbdbd">+</div>
  <div class="t" style="left:664px;top:120px;font-size:18px;line-height:22px;color:#bdbdbd">A</div><div class="a" style="left:676px;top:124px;width:4px;height:1px;background:#bdbdbd"></div>
  <div class="t" style="left:452px;top:145px;font-size:16px;line-height:20px;font-weight:bold;color:#bdbdbd">B</div>
  <div class="t" style="left:479px;top:145px;font-size:16px;line-height:20px;font-style:italic;color:#bdbdbd">I</div>
  <div class="t" style="left:501px;top:144px;font-size:15px;line-height:20px;color:#bdbdbd">U</div><div class="a" style="left:500px;top:161px;width:13px;height:1px;background:#bdbdbd"></div>
  <div class="t" style="left:526px;top:145px;font-size:16px;line-height:20px;color:#bdbdbd">S</div><div class="a" style="left:524px;top:155px;width:15px;height:1px;background:#bdbdbd"></div>
  <div class="t" style="left:551px;top:144px;font-size:15px;line-height:20px;color:#bdbdbd">A</div><div class="a" style="left:550px;top:160px;width:14px;height:2.500px;background:#bdbdbd"></div>
  <div class="ar" style="left:569px;top:154.5px;border-top-color:#bdbdbd"></div>
  <svg width="18" height="14" viewBox="0 0 18 14" style="left:583px;top:148px"><path d="M.5 2.500l10 11M10.500 2.500l-10 11" stroke="#bdbdbd" stroke-width="1.200"/><text x="12" y="6" font-size="7" fill="#bdbdbd" font-family="Liberation Sans">2</text></svg>
  <svg width="18" height="16" viewBox="0 0 18 16" style="left:608px;top:148px"><path d="M.5 1l10 11M10.500 1l-10 11" stroke="#bdbdbd" stroke-width="1.200"/><text x="12" y="15" font-size="7" fill="#bdbdbd" font-family="Liberation Sans">2</text></svg>
  <svg width="17" height="15" viewBox="0 0 17 15" style="left:636px;top:148px"><path d="M9 .8l7 6.500-6.500 6.500h-4L.8 9z" fill="none" stroke="#bdbdbd" stroke-width="1.200"/><path d="M4.500 13.800h11" stroke="#bdbdbd" stroke-width="1.200"/></svg>
  <div class="t" style="left:661px;top:146.500px;font-size:8.500px;line-height:10px;color:#e0763c">wén</div><div class="t" style="left:663px;top:154px;font-size:11px;line-height:12px;color:#222">文</div>
  <div class="ar" style="left:681.500px;top:153.5px"></div>
  <div class="a" style="left:686px;top:171px;width:4px;height:4px;border-right:1px solid #b0b0b0;border-bottom:1px solid #b0b0b0"></div>
  <div class="sep" style="left:695px;top:115px;height:62px"></div>
  <div class="a" style="left:705px;top:120.5px;width:3px;height:3px;border:1px solid #bdbdbd;border-radius:50%"></div>
  <div class="a" style="left:705px;top:127px;width:3px;height:3px;border:1px solid #bdbdbd;border-radius:50%"></div>
  <div class="a" style="left:705px;top:133.5px;width:3px;height:3px;border:1px solid #bdbdbd;border-radius:50%"></div>
  <div class="a" style="left:711px;top:121.5px;width:10px;height:1.1px;background:#bdbdbd"></div><div class="a" style="left:711px;top:128px;width:10px;height:1.1px;background:#bdbdbd"></div><div class="a" style="left:711px;top:134.5px;width:10px;height:1.1px;background:#bdbdbd"></div>
  <div class="ar" style="left:725px;top:127.5px;border-top-color:#bdbdbd"></div>
  <div class="a" style="left:739px;top:120.5px;width:3px;height:3px;border-top:1px solid #bdbdbd;border-bottom:1px solid #bdbdbd"></div>
  <div class="a" style="left:739px;top:127px;width:3px;height:3px;border-top:1px solid #bdbdbd;border-bottom:1px solid #bdbdbd"></div>
  <div class="a" style="left:739px;top:133.5px;width:3px;height:3px;border-top:1px solid #bdbdbd;border-bottom:1px solid #bdbdbd"></div>
  <div class="a" style="left:745px;top:121.5px;width:10px;height:1.1px;background:#bdbdbd"></div><div class="a" style="left:745px;top:128px;width:10px;height:1.1px;background:#bdbdbd"></div><div class="a" style="left:745px;top:134.5px;width:10px;height:1.1px;background:#bdbdbd"></div>
  <div class="ar" style="left:759px;top:127.5px;border-top-color:#bdbdbd"></div>
  <div class="a" style="left:777px;top:121.5px;width:15px;height:1.1px;background:#bdbdbd"></div><div class="a" style="left:784px;top:128px;width:8px;height:1.1px;background:#bdbdbd"></div><div class="a" style="left:777px;top:134.5px;width:15px;height:1.1px;background:#bdbdbd"></div>
  <svg width="7" height="6" viewBox="0 0 7 6" style="left:777px;top:125px"><path d="M6.500 3H.8M3 .7L.7 3 3 5.300" fill="none" stroke="#bdbdbd" stroke-width="1"/></svg>
  <div class="a" style="left:802px;top:121.5px;width:15px;height:1.1px;background:#bdbdbd"></div><div class="a" style="left:809px;top:128px;width:8px;height:1.1px;background:#bdbdbd"></div><div class="a" style="left:802px;top:134.5px;width:15px;height:1.1px;background:#bdbdbd"></div>
  <svg width="7" height="6" viewBox="0 0 7 6" style="left:802px;top:125px"><path d="M.5 3h5.700M4 .7L6.300 3 4 5.300" fill="none" stroke="#bdbdbd" stroke-width="1"/></svg>
  <div class="a" style="left:829px;top:120px;width:1.300px;height:15px;background:#444"></div><div class="a" style="left:833px;top:120px;width:1.300px;height:15px;background:#444"></div>
  <div class="t" style="left:835.500px;top:116px;font-size:12.500px;line-height:14px;color:#e0763c">A</div><div class="a" style="left:837.500px;top:130px;width:1.200px;height:5px;background:#444"></div><div class="a" style="left:841.500px;top:130px;width:1.200px;height:5px;background:#444"></div>
  <div class="ar" style="left:850px;top:127.5px"></div>
  <div class="a" style="left:863px;top:121px;width:17px;height:15px;border:1px dashed #bdbdbd;border-radius:2px"></div>
  <div class="a" style="left:867px;top:125px;width:9px;height:1.1px;background:#bdbdbd"></div><div class="a" style="left:867px;top:128px;width:9px;height:1.1px;background:#bdbdbd"></div><div class="a" style="left:867px;top:131px;width:9px;height:1.1px;background:#bdbdbd"></div>
  <div class="ar" style="left:884px;top:127.5px;border-top-color:#bdbdbd"></div>
  <div class="a" style="left:899px;top:120px;width:1.200px;height:16px;background:#bdbdbd"></div><div class="t" style="left:902px;top:117px;font-size:10.500px;line-height:11px;color:#bdbdbd">A</div><div class="t" style="left:902.500px;top:126px;font-size:10.500px;line-height:11px;color:#bdbdbd">B</div>
  <div class="ar" style="left:917px;top:127.5px;border-top-color:#bdbdbd"></div>
  <div class="a" style="left:705px;top:147.5px;width:15px;height:1.1px;background:#bdbdbd"></div><div class="a" style="left:705px;top:151.8px;width:10px;height:1.1px;background:#bdbdbd"></div><div class="a" style="left:705px;top:156.1px;width:15px;height:1.1px;background:#bdbdbd"></div><div class="a" style="left:705px;top:160.4px;width:10px;height:1.1px;background:#bdbdbd"></div>
  <div class="a" style="left:731px;top:147.5px;width:15px;height:1.1px;background:#bdbdbd"></div><div class="a" style="left:734px;top:151.8px;width:9px;height:1.1px;background:#bdbdbd"></div><div class="a" style="left:731px;top:156.1px;width:15px;height:1.1px;background:#bdbdbd"></div><div class="a" style="left:734px;top:160.4px;width:9px;height:1.1px;background:#bdbdbd"></div>
  <div class="a" style="left:756px;top:147.5px;width:15px;height:1.1px;background:#bdbdbd"></div><div class="a" style="left:761px;top:151.8px;width:10px;height:1.1px;background:#bdbdbd"></div><div class="a" style="left:756px;top:156.1px;width:15px;height:1.1px;background:#bdbdbd"></div><div class="a" style="left:761px;top:160.4px;width:10px;height:1.1px;background:#bdbdbd"></div>
  <div class="a" style="left:781px;top:147.5px;width:15px;height:1.1px;background:#bdbdbd"></div><div class="a" style="left:781px;top:151.8px;width:15px;height:1.1px;background:#bdbdbd"></div><div class="a" style="left:781px;top:156.1px;width:15px;height:1.1px;background:#bdbdbd"></div><div class="a" style="left:781px;top:160.4px;width:15px;height:1.1px;background:#bdbdbd"></div>
  <div class="a" style="left:805px;top:156px;width:16px;height:1.1px;background:#bdbdbd"></div><div class="a" style="left:805px;top:160.3px;width:16px;height:1.1px;background:#bdbdbd"></div>
  <svg width="17" height="7" viewBox="0 0 17 7" style="left:805px;top:146px"><path d="M.5 0v7M16.500 0v7M2.500 3.500h12M4.500 1.500l-2 2 2 2M12.500 1.500l2 2-2 2" fill="none" stroke="#bdbdbd" stroke-width="1"/></svg>
  <div class="a" style="left:840px;top:148px;width:9px;height:1.1px;background:#bdbdbd"></div><div class="a" style="left:840px;top:153.5px;width:9px;height:1.1px;background:#bdbdbd"></div><div class="a" style="left:840px;top:159px;width:9px;height:1.1px;background:#bdbdbd"></div>
  <svg width="5" height="15" viewBox="0 0 5 15" style="left:834px;top:146.5px"><path d="M2.500 1v4M.7 3l1.800-2 1.800 2M2.500 14v-4M.7 12l1.800 2 1.800-2" fill="none" stroke="#bdbdbd" stroke-width="1"/></svg>
  <div class="a" style="left:865px;top:148px;width:9px;height:1.1px;background:#bdbdbd"></div><div class="a" style="left:865px;top:153.5px;width:9px;height:1.1px;background:#bdbdbd"></div><div class="a" style="left:865px;top:159px;width:9px;height:1.1px;background:#bdbdbd"></div>
  <svg width="5" height="15" viewBox="0 0 5 15" style="left:859px;top:146.5px"><path d="M2.500 5V1M.7 3l1.800 2 1.800-2M2.500 10v4M.7 12l1.800-2 1.800 2" fill="none" stroke="#bdbdbd" stroke-width="1"/></svg>
  <div class="a" style="left:890px;top:148px;width:9px;height:1.1px;background:#bdbdbd"></div><div class="a" style="left:890px;top:153.5px;width:9px;height:1.1px;background:#bdbdbd"></div><div class="a" style="left:890px;top:159px;width:9px;height:1.1px;background:#bdbdbd"></div>
  <svg width="5" height="15" viewBox="0 0 5 15" style="left:884px;top:146.5px"><path d="M2.500 1v13M.7 3l1.800-2 1.800 2M.7 12l1.800 2 1.800-2" fill="none" stroke="#bdbdbd" stroke-width="1"/></svg>
  <div class="ar" style="left:905px;top:153.5px;border-top-color:#bdbdbd"></div>
  <div class="a" style="left:923px;top:171px;width:4px;height:4px;border-right:1px solid #b0b0b0;border-bottom:1px solid #b0b0b0"></div>
  <div class="sep" style="left:931px;top:115px;height:62px"></div>
  <div class="a" style="left:952px;top:122px;width:23px;height:20px;border:1.300px dashed #e0763c;border-radius:2px"></div>
  <div class="t" style="left:956px;top:124px;font-size:11.500px;line-height:14px;color:#444">A</div><div class="a" style="left:956px;top:137px;width:15px;height:1.200px;background:#555"></div><div class="a" style="left:965.500px;top:128px;width:5.500px;height:1px;background:#777"></div><div class="a" style="left:965.500px;top:131.500px;width:5.500px;height:1px;background:#777"></div>
  <div class="t" style="left:942px;top:148px;color:#222">文本框</div>
  <div class="ar" style="left:982px;top:154.5px"></div>
  <div class="a" style="left:1011px;top:121px;width:16px;height:16px;border:1.300px solid #444;border-radius:2px"></div><div class="a" style="left:1003px;top:127px;width:17px;height:17px;border:1.300px solid #e0763c;border-radius:50%;background:#f3e0d6"></div>
  <div class="t" style="left:999px;top:148px;color:#222">形状</div>
  <div class="ar" style="left:1026.500px;top:154.5px"></div>
  <svg width="18" height="17" viewBox="0 0 18 17" style="left:1041.500px;top:121px"><path d="M15.500 8V3a1.500 1.500 0 0 0-1.500-1.500H2.500A1.500 1.500 0 0 0 1 3v9a1.500 1.500 0 0 0 1.500 1.500h7" fill="none" stroke="#444" stroke-width="1.200"/><circle cx="5.500" cy="5.500" r="1.500" fill="none" stroke="#444" stroke-width="1"/><path d="M1.500 12l4-3.500 2.500 2 3.500-4 3 3" fill="none" stroke="#444" stroke-width="1.100"/><path d="M14 10.500v6M11 13.500h6" stroke="#e0763c" stroke-width="1.300"/></svg>
  <div class="t" style="left:1062px;top:121px;color:#222">图片</div>
  <div class="ar" style="left:1091px;top:127.5px"></div>
  <svg width="16" height="15.500" viewBox="0 0 18 17" style="left:1042px;top:146.500px"><path d="M9 1l7.500 3.500L9 8 1.500 4.500z" fill="#f6e3d8" stroke="#e0763c" stroke-width="1.200" stroke-linejoin="round"/><path d="M1.500 8.500L9 12l7.500-3.500M1.500 12.500L9 16l7.500-3.500" fill="none" stroke="#444" stroke-width="1.200" stroke-linejoin="round"/></svg>
  <div class="t" style="left:1062px;top:147px;color:#222">排列</div>
  <div class="ar" style="left:1091px;top:153.5px"></div>
  <svg width="10" height="14" viewBox="0 0 10 14" style="left:1101px;top:122px"><path d="M2 3h8M3 3v8h7" fill="none" stroke="#bdbdbd" stroke-width="1.200"/></svg>
  <svg width="10" height="14" viewBox="0 0 10 14" style="left:1102px;top:148px"><path d="M1 1h9M1 1v11h9M4 4h6M4 4v8" fill="none" stroke="#bdbdbd" stroke-width="1.200"/></svg>

  <!-- panels -->
  <svg width="11" height="10" viewBox="0 0 11 10" style="left:8px;top:195px"><path d="M5 .5L.7 5 5 9.500M10 .5L5.700 5 10 9.500" fill="none" stroke="#999" stroke-width="1"/></svg>
  <div class="t" style="left:48px;top:193px;color:#333">大纲</div>
  <div class="a" style="left:86px;top:191px;width:56px;height:20px;border-radius:10px;background:#a1a1a1;color:#fff;line-height:20px;text-align:center">幻灯片</div>
  <div class="t" style="left:22px;top:231px;font-family:'Liberation Serif',serif;font-weight:bold;font-size:13px;color:#222">1</div>
  <div class="t" style="left:22px;top:327px;font-weight:bold;font-size:12px;color:#d9622b">2</div>
  <div class="a" id="th1" style="left:36px;top:224px;width:104px;height:80px;background:#fff;border:1px solid #c6c6c6;overflow:hidden">
    <svg width="98" height="74" viewBox="0 0 98 74" style="left:2px;top:2px">
      <defs><pattern id="hatch" width="3" height="3" patternUnits="userSpaceOnUse" patternTransform="rotate(-58)"><rect width="3" height="1.1" fill="#dcdcdc"/></pattern>
      <linearGradient id="t1g" x1="0" x2="1"><stop offset="0" stop-color="#fbfbfb"/><stop offset=".55" stop-color="#f4f4f4"/><stop offset=".8" stop-color="#e6e6e6"/><stop offset="1" stop-color="#d8d8d8"/></linearGradient></defs>
      <rect width="98" height="74" fill="url(#t1g)"/>
      <rect width="62" height="15" fill="url(#hatch)"/>
      <rect y="58" width="52" height="16" fill="url(#hatch)"/>
      <path d="M44.0 0C46.0 30 36.0 55 22.0 74" fill="none" stroke="#d2d2d2" stroke-width="1.6"/><path d="M50.7 0C52.4 30 42.0 55 27.7 74" fill="none" stroke="#e4e4e4" stroke-width="1.6"/><path d="M57.4 0C58.8 30 48.0 55 33.4 74" fill="none" stroke="#d2d2d2" stroke-width="1.6"/><path d="M64.1 0C65.2 30 54.0 55 39.1 74" fill="none" stroke="#e4e4e4" stroke-width="1.6"/><path d="M70.8 0C71.6 30 60.0 55 44.8 74" fill="none" stroke="#d2d2d2" stroke-width="1.6"/><path d="M77.5 0C78.0 30 66.0 55 50.5 74" fill="none" stroke="#e4e4e4" stroke-width="1.6"/><path d="M84.2 0C84.4 30 72.0 55 56.2 74" fill="none" stroke="#d2d2d2" stroke-width="1.6"/><path d="M90.9 0C90.8 30 78.0 55 61.9 74" fill="none" stroke="#e4e4e4" stroke-width="1.6"/><path d="M97.6 0C97.2 30 84.0 55 67.6 74" fill="none" stroke="#d2d2d2" stroke-width="2.4"/><path d="M104.3 0C103.6 30 90.0 55 73.3 74" fill="none" stroke="#e4e4e4" stroke-width="2.4"/><path d="M111.0 0C110.0 30 96.0 55 79.0 74" fill="none" stroke="#d2d2d2" stroke-width="2.4"/><path d="M117.7 0C116.4 30 102.0 55 84.7 74" fill="none" stroke="#e4e4e4" stroke-width="2.4"/><path d="M124.4 0C122.8 30 108.0 55 90.4 74" fill="none" stroke="#d2d2d2" stroke-width="2.4"/>
      <rect x="0" y="15" width="50" height="43" fill="#fdfdfd"/>
      <path d="M78 60l6 14h-9z" fill="#bdbdbd"/>
      <rect x="1" y="1.500" width="6" height="1.800" fill="#222"/>
      <rect x="6" y="35.500" width="34" height=".8" fill="#666"/>
      <rect x="7" y="39.500" width="32" height="1.300" fill="#c4c4c4"/>
      <rect x="7" y="53" width="12" height="1.500" fill="#aaa"/><rect x="24" y="53" width="8" height="1.500" fill="#aaa"/>
      <rect x="95" y="35" width="1.500" height="2" fill="#999"/><rect x="95" y="39" width="1.500" height="2" fill="#999"/><rect x="95" y="43" width="1.500" height="2" fill="#999"/><rect x="95" y="47" width="1.500" height="2" fill="#999"/>
    </svg>
    <div class="a" style="left:7px;top:28px;font-size:6.300px;line-height:8px;color:#222;font-weight:bold;white-space:nowrap;letter-spacing:-.1px">选修课注意事项</div>
  </div>
  <div class="a" id="th2" style="left:35px;top:319px;width:106px;height:82px;background:#fff;border:2px solid #e06a2c;border-radius:3px"></div>
  <div class="a" style="left:39px;top:323px;width:98px;height:73px;background:#362b24;overflow:hidden">
    <div class="a" style="left:-2px;top:22px;width:6px;height:20px;background:linear-gradient(180deg,#555a60,#111)"></div>
    <div class="a" style="left:94px;top:22px;width:6px;height:20px;background:linear-gradient(180deg,#555a60,#111)"></div>
    <div class="a" style="left:6px;top:26px;width:4px;height:5px;border-radius:40%;background:#efb85a;box-shadow:0 0 3px #d99a35"></div>
    <div class="a" style="left:2.500px;top:38px;width:5px;height:7px;border-radius:40%;background:#efb85a;box-shadow:0 0 3px #d99a35"></div>
    <div class="a" style="left:9px;top:34px;width:2px;height:2px;border-radius:50%;background:#e0a040"></div>
    <div class="a" style="left:88px;top:26px;width:4px;height:5px;border-radius:40%;background:#efb85a;box-shadow:0 0 3px #d99a35"></div>
    <div class="a" style="left:90.500px;top:38px;width:5px;height:7px;border-radius:40%;background:#efb85a;box-shadow:0 0 3px #d99a35"></div>
    <div class="a" style="left:86px;top:34px;width:2px;height:2px;border-radius:50%;background:#e0a040"></div>
    <div class="a" style="left:0;top:28px;width:98px;text-align:center;color:#fff;font-size:7px;line-height:9px;font-weight:bold;white-space:nowrap">选修课注意事项</div>
    <div class="a" style="left:24px;top:38.500px;width:50px;height:1px;background:#999"></div>
    <div class="a" style="left:31px;top:42px;width:36px;height:2px;background:#a9a4a0"></div>
    <div class="a" style="left:33px;top:49px;width:13px;height:2px;background:#bcb7b3"></div>
    <div class="a" style="left:57px;top:49px;width:8px;height:2px;background:#bcb7b3"></div>
  </div>
  <svg width="16" height="16" viewBox="0 0 16 16" style="left:66px;top:611px"><path d="M8 .5v15M.5 8h15" stroke="#444" stroke-width="1.400"/></svg>
  <div class="a" style="left:818px;top:590px;width:14px;height:15px;background:#dadada"></div>
  <div class="a" style="left:819px;top:371px;width:12px;height:161px;border-radius:6px;background:#f1f1f1;border:1px solid #c6c6c6"></div>
  <div class="ar" style="left:821.800px;top:191.500px;border-top:none;border-left-width:3.200px;border-right-width:3.200px;border-bottom:3.500px solid #8a8a8a"></div>
  <div class="ar" style="left:821.800px;top:541.5px;border-top-color:#8a8a8a;border-left-width:3.200px;border-right-width:3.200px;border-top-width:3.500px"></div>
  <svg width="7" height="9" viewBox="0 0 7 9" style="left:821.500px;top:556px"><path d="M3.500 0l3.500 3.500H0zM3.500 4l3.500 3.500H0z" fill="#8a8a8a"/><path d="M0 8.500h7" stroke="#8a8a8a"/></svg>
  <svg width="7" height="9" viewBox="0 0 7 9" style="left:821.500px;top:574px"><path d="M0 .5h7" stroke="#8a8a8a"/><path d="M0 1.500h7l-3.500 3.500zM0 5.500h7l-3.500 3.500z" fill="#8a8a8a"/></svg>
  <div class="a" style="left:401px;top:594px;width:337px;height:12px;background:#fff;border:1px solid #d0d0d0;border-bottom:none"></div>
  <div class="a" style="left:415px;top:602px;width:13px;height:3px;border:1px solid #555;border-bottom:none;border-radius:2px 2px 0 0"></div>
  <div class="a" style="left:486px;top:602px;width:12px;height:3px;border:1px solid #555;border-bottom:none"></div>
  <svg width="10" height="4" viewBox="0 0 10 4" style="left:562px;top:601px"><path d="M0 4l5-3.500 5 3.500" fill="none" stroke="#555"/></svg>
  <svg width="8" height="5" viewBox="0 0 8 5" style="left:636px;top:600px"><path d="M.5 5l3.500-4.500 3.500 4.500" fill="none" stroke="#f0683a"/></svg>
  <svg width="17" height="17" viewBox="0 0 17 17" style="left:157px;top:612px"><path d="M1 1.500h15v11H6L2.500 15.500v-3H1z" fill="none" stroke="#555" stroke-width="1.200" stroke-linejoin="round"/><path d="M4 5h9M4 8.500h7" stroke="#555" stroke-width="1.100"/></svg>
  <div class="t" style="left:181px;top:612px;color:#555;font-size:13.300px">单击此处添加备注</div>
  <div class="t" style="left:12px;top:647px;color:#555;font-size:12.500px">幻灯片 2 / 2</div>
  <div class="sep" style="left:90px;top:642px;height:24px;background:#e2e2e2"></div>
  <div class="t" style="left:101px;top:647px;color:#555;font-size:12.500px">2_Office 主题</div>
  <div class="sep" style="left:186px;top:642px;height:24px;background:#e2e2e2"></div>
  <div class="t" style="left:206px;top:647px;font-size:14px;color:#555">T</div><div class="t" style="left:214px;top:650px;font-size:8px;line-height:10px;color:#555;font-weight:bold">?</div>
  <div class="t" style="left:225px;top:647px;color:#555">缺失字体</div>
  <div class="sep" style="left:292px;top:642px;height:24px;background:#e2e2e2"></div>
  <svg width="16" height="16" viewBox="0 0 16 16" style="left:442px;top:646px"><path d="M8 1l6.500 3.500v7L8 15 1.500 11.500v-7z" fill="none" stroke="#555" stroke-width="1.100" stroke-linejoin="round"/><path d="M1.500 4.500L8 8l6.500-3.500M8 8v7" fill="none" stroke="#555" stroke-width="1.100"/></svg>
  <div class="t" style="left:464px;top:647px;color:#555">一键美化</div>
  <div class="ar" style="left:517px;top:653px;border-top:none;border-bottom:3.500px solid #666"></div>
  <svg width="20" height="13" viewBox="0 0 20 13" style="left:742px;top:648px"><path d="M0 1h13M0 4.500h13M0 8h13" stroke="#444" stroke-width="1.200"/><path d="M9 10h6l-3 3z" fill="#333"/></svg>
  <div class="ar" style="left:762px;top:652.5px"></div>
  <div class="a" style="left:773px;top:642px;width:23px;height:24px;border-radius:3px;background:#c9c9c9"></div>
  <svg width="16" height="14" viewBox="0 0 16 14" style="left:777px;top:647px"><rect x=".6" y=".6" width="14.800" height="12.800" rx="1" fill="none" stroke="#333" stroke-width="1.200"/><path d="M4.500 .6v9h11M.6 9.600h4" stroke="#333" stroke-width="1.200" fill="none"/></svg>
  <svg width="16" height="14" viewBox="0 0 16 14" style="left:803px;top:647px"><rect x=".6" y=".6" width="6" height="5" rx="1" fill="none" stroke="#333" stroke-width="1.100"/><rect x="9.400" y=".6" width="6" height="5" rx="1" fill="none" stroke="#333" stroke-width="1.100"/><rect x=".6" y="8.400" width="6" height="5" rx="1" fill="none" stroke="#333" stroke-width="1.100"/><rect x="9.400" y="8.400" width="6" height="5" rx="1" fill="none" stroke="#333" stroke-width="1.100"/></svg>
  <svg width="16" height="15" viewBox="0 0 16 15" style="left:829px;top:647px"><path d="M8 2.500C6.500 1 4 .8 .7 1v11c3-.2 5.500.2 7.300 1.800C9.800 12.200 12.300 11.800 15.300 12V1C12 .8 9.500 1 8 2.500zM8 2.500v11.300" fill="none" stroke="#333" stroke-width="1.200" stroke-linejoin="round"/></svg>
  <div class="a" style="left:865px;top:642px;width:31px;height:24px;border-radius:4px;background:#fa7550"></div>
  <svg width="10" height="12" viewBox="0 0 10 12" style="left:877px;top:648px"><path d="M.5.500l9 5.500-9 5.500z" fill="#fff"/></svg>
  <div class="ar" style="left:900px;top:652.5px"></div>
  <div class="t" style="left:925px;top:646px;color:#555;font-size:12.500px">53%</div>
  <div class="ar" style="left:954px;top:652.5px"></div>
  <div class="a" style="left:971px;top:653px;width:11px;height:2px;background:#444"></div>
  <div class="a" style="left:994px;top:653.500px;width:30px;height:1px;background:#555"></div>
  <div class="a" style="left:1034px;top:653.500px;width:78px;height:1px;background:#cfcfcf"></div>
  <div class="a" style="left:1062px;top:651px;width:1px;height:6px;background:#cfcfcf"></div>
  <div class="a" style="left:1022px;top:648px;width:12px;height:12px;border-radius:50%;border:1.200px solid #444;background:#fafafa"></div>

  <!-- right panel -->
  <div class="t" style="left:842px;top:187px;color:#333">对象属性</div>
  <div class="ar" style="left:894px;top:192.500px;border-top-color:#888;border-left-width:2.500px;border-right-width:2.500px;border-top-width:3.200px"></div>
  <svg width="22" height="22" viewBox="0 0 22 22" style="left:848px;top:210px"><path d="M10.400 2.200l7.100 7.300-7.700 11.500-8-9z" fill="none" stroke="#333" stroke-width="1.200" stroke-linejoin="round"/><path d="M2.300 6.800l13.700.5" stroke="#333" stroke-width="1.200"/><rect x="18" y="8.300" width="3" height="12.200" rx=".8" fill="#eaf2ff" stroke="#4a8ef0" stroke-width="1"/></svg>
  <div class="t" style="left:847px;top:237px;color:#d9622b;font-weight:bold">填充</div>
  <div class="a" style="left:843px;top:259px;width:267px;height:1px;background:#dedede"></div>
  <div class="a" style="left:843px;top:258px;width:32px;height:2px;background:#d9622b"></div>
  <svg width="8" height="8" viewBox="0 0 8 8" style="left:846px;top:285px"><path d="M7.500 0v7.500H0z" fill="#d9622b"/></svg>
  <div class="t" style="left:858px;top:281px;color:#d9622b;font-weight:bold">填充</div>
  <div class="a" style="left:1026px;top:277px;width:100px;height:25px;background:#fff;border:1px solid #cfcfcf;border-radius:4px"></div>
  <div class="a" style="left:1029px;top:280px;width:90px;height:19px;background:#362b24"></div>
  <div class="a" style="left:858px;top:316px;width:14px;height:14px;border-radius:50%;border:1px solid #9a9a9a;background:#f9f9f9"></div>
  <div class="t" style="left:876px;top:315px;color:#444">纯色填充(<u>S</u>)</div>
  <div class="a" style="left:858px;top:341px;width:14px;height:14px;border-radius:50%;border:1px solid #9a9a9a;background:#f9f9f9"></div>
  <div class="t" style="left:876px;top:340px;color:#444">渐变填充(<u>G</u>)</div>
  <div class="a" style="left:858px;top:366px;width:14px;height:14px;border-radius:50%;border:1px solid #9a9a9a;background:#f9f9f9"></div>
  <div class="t" style="left:876px;top:365px;color:#444">图片或纹理填充(<u>P</u>)</div>
  <div class="a" style="left:858px;top:391px;width:14px;height:14px;border-radius:50%;border:1px solid #9a9a9a;background:#f9f9f9"></div>
  <div class="t" style="left:876px;top:390px;color:#444">图案填充(<u>A</u>)</div>
  <div class="a" style="left:862px;top:320px;width:6px;height:6px;border-radius:50%;background:#c27b4b"></div>
  <div class="a" style="left:858px;top:417px;width:14px;height:14px;border:1px solid #8a8a8a;border-radius:1px;background:#fafafa"></div>
  <div class="t" style="left:875px;top:415px;color:#444">隐藏背景图形(<u>H</u>)</div>
  <div class="t" style="left:857px;top:468px;color:#444">颜色(C)</div>
  <div class="a" style="left:1026px;top:466px;width:100px;height:21px;background:#fff;border:1px solid #cfcfcf;border-radius:4px"></div>
  <div class="t" style="left:857px;top:505px;color:#444">透明度(T)</div>
  <div class="a" style="left:998px;top:505px;width:14px;height:14px;border-radius:50%;border:1px solid #aaa;background:#fdfdfd"></div><div class="a" style="left:1002px;top:511.500px;width:6px;height:1px;background:#555"></div>
  <div class="t" style="left:1014px;top:497px;color:#555">0%</div>
  <div class="a" style="left:1018px;top:511px;width:100px;height:1px;background:#bdbdbd"></div>
  <svg width="9" height="7" viewBox="0 0 9 7" style="left:1013.500px;top:510px"><path d="M4.500 0L9 7H0z" fill="#d98a4e"/></svg>
  <div class="a" style="left:843px;top:599px;width:58px;height:27px;background:#fff;border:1px solid #bdbdbd;color:#333;line-height:25px;text-align:center">全部应用</div>
  <div class="a" style="left:907px;top:599px;width:58px;height:27px;background:#ececec;border:1px solid #c9c9c9;color:#bcbcbc;line-height:25px;text-align:center">重置背景</div>
  <svg width="15" height="15" viewBox="0 0 15 15" style="left:972px;top:607px"><circle cx="7.500" cy="7.500" r="6.800" fill="none" stroke="#555" stroke-width="1.100"/><path d="M5.500 4.500l4.500 3-4.500 3z" fill="none" stroke="#f0683a" stroke-width="1.200" stroke-linejoin="round"/></svg>
  <div class="t" style="left:992px;top:607px;color:#3b82f0">操作技巧</div>
</div>

<div class="a" id="meet">
  <div class="a" id="mhead"></div>
  <div class="t" style="left:12px;top:10px;color:#fff;font-size:12px">正在讲话:</div>
  <svg width="46" height="24" viewBox="0 0 46 24" style="left:108px;top:6px">
    <polygon points="0,14 13,1 26,14 20,23 13,16 6,23" fill="#55585c" opacity=".8"/>
    <polygon points="16,14 30,1 45,15 38,23 30,16 23,23" fill="#606367" opacity=".8"/>
  </svg>
  <!-- tile 1 -->
  <div class="tile" style="top:38.5px">
    <div class="av" style="top:20.500px;background:#0a0a0c">
      <svg width="51" height="51" viewBox="0 0 51 51" style="left:0;top:0">
        <defs><filter id="cb" x="-10%" y="-10%" width="120%" height="120%"><feGaussianBlur stdDeviation=".8"/></filter>
        <linearGradient id="sky1" x1="0" y1="0" x2="0" y2="1"><stop offset="0" stop-color="#09090b"/><stop offset=".6" stop-color="#12141c"/><stop offset=".78" stop-color="#2a2220"/><stop offset="1" stop-color="#0c0b0b"/></linearGradient></defs>
        <rect width="51" height="51" fill="url(#sky1)"/>
        <g filter="url(#cb)" opacity=".86">
          <rect x="9" y="5" width="1.200" height="33" fill="#a9bfd6"/>
          <rect x="8.600" y="12" width="2" height="4" fill="#e9c9a0"/>
          <circle cx="9.600" cy="18" r="2.100" fill="#d6e8ff"/>
          <rect x="8.400" y="21" width="2.400" height="6" fill="#5fb0e6"/>
          <rect x="8.600" y="25" width="2" height="2.500" fill="#e87080"/>
          <circle cx="9.600" cy="31.500" r="3" fill="#a8d4ee"/>
          <path d="M4 38l5.600-6 5.600 6z" fill="#6f8fa8" opacity=".7"/>
          <rect x="14" y="31" width="3" height="8" fill="#d99a58"/>
          <rect x="18" y="29" width="3.500" height="10" fill="#f0cf9c"/>
          <rect x="22.500" y="26" width="3" height="13" fill="#fff1d2"/>
          <rect x="26.500" y="30" width="3" height="9" fill="#c98448"/>
          <rect x="30.500" y="27" width="3.500" height="12" fill="#f2dcb8"/>
          <rect x="35.500" y="22" width="5" height="17" fill="#b9cfe6"/>
          <rect x="35.500" y="22" width="5" height="5" fill="#f6fbff"/>
          <rect x="42" y="23" width="4" height="16" fill="#c8d8e8"/>
          <rect x="42" y="23" width="4" height="6" fill="#f0a8a0"/>
          <rect x="47" y="25" width="3" height="14" fill="#aebfd2"/>
          <rect x="12" y="38.500" width="39" height="2" fill="#e0a860" opacity=".75"/>
          <rect x="14" y="41" width="30" height="1.500" fill="#7a5030" opacity=".7"/>
        </g>
      </svg>
    </div>
    <div class="lab" style="padding-left:0;width:121px">
      <div class="a" style="left:0;top:0;width:20px;height:20px;background:#f5821f"></div>
      <svg width="20" height="20" viewBox="0 0 20 20" style="left:0;top:0"><circle cx="10" cy="7" r="3.4" fill="#fff"/><path d="M3 17c0-4.2 3-6 7-6s7 1.800 7 6z" fill="#fff"/></svg>
      <svg width="18" height="18" viewBox="0 0 18 18" style="left:21px;top:1px"><rect x="1.500" y="2.500" width="15" height="10.500" rx="1.500" fill="#fff"/><path d="M6 16h6M9 13v3" stroke="#fff" stroke-width="1.600"/><path d="M5.500 10.500c.5-2.500 2-3.800 4.500-3.800V5l3 2.800-3 2.800V8.800c-1.800 0-3.200.4-4.500 1.700z" fill="#101113"/></svg>
      <svg width="16" height="18" viewBox="0 0 16 18" style="left:41px;top:1px"><rect x="5" y="1" width="6" height="10" rx="3" fill="#fff"/><path d="M2.500 8a5.500 5.500 0 0 0 11 0M8 13.500v3" fill="none" stroke="#fff" stroke-width="1.500"/></svg>
      <span class="a" style="left:61px;top:0">努力的一天</span>
    </div>
  </div>
  <!-- tile 2 -->
  <div class="tile" style="top:146.5px">
    <div class="av" style="background:radial-gradient(circle at 50% 45%,#a4a6a6,#7b7d7e)">
      <div class="a" style="left:6px;top:18px;width:10px;height:12px;background:#5a4a42;border:1.500px solid #e8e6e2;transform:rotate(-18deg)"></div>
      <div class="a" style="left:22px;top:8px;width:12px;height:12px;border-radius:50%;background:#e9e9e6"></div>
      <div class="a" style="left:24px;top:5px;width:9px;height:6px;background:#4a4c50;border-radius:3px 3px 0 0"></div>
      <div class="a" style="left:19px;top:18px;width:17px;height:14px;background:#55585d;border-radius:4px"></div>
      <div class="a" style="left:22px;top:28px;width:10px;height:14px;background:#efefec;border-radius:4px"></div>
      <div class="a" style="left:20px;top:40px;width:6px;height:5px;background:#f39a3c;border-radius:2px"></div>
      <div class="a" style="left:29px;top:40px;width:7px;height:5px;background:#f39a3c;border-radius:2px"></div>
      <div class="a" style="left:26px;top:14px;width:5px;height:3px;background:#f08a2c;border-radius:2px"></div>
    </div>
    <div class="lab"><svg width="16" height="16" viewBox="0 0 16 16"><rect x="5.6" y="1.5" width="4.8" height="8.2" rx="2.4" fill="#c9cacc"/><path d="M3.2 7.2a4.8 4.8 0 0 0 9.6 0M8 12v2.2M5.4 14.4h5.2" fill="none" stroke="#c9cacc" stroke-width="1.3"/><path d="M2.2 13.6L13.6 1.6" stroke="#e8452c" stroke-width="1.5"/></svg>崔可鑫</div>
    <div class="a" style="left:169px;top:91px;width:3px;height:7px;background:#f0541e;border-radius:1px"></div>
    <div class="a" style="left:174px;top:89px;width:3px;height:9px;background:#d8d8d8;border-radius:1px"></div>
  </div>
  <!-- tile 3 -->
  <div class="tile" style="top:254.5px">
    <div class="av" style="background:linear-gradient(100deg,#e9e9ea 0,#dcdcdc 30%,#e6d3cb 50%,#cfb7ae 75%,#8d8a8c 100%)">
      <div class="a" style="left:0;top:0;width:50px;height:16px;background:linear-gradient(90deg,#3f4045,#55565b 50%,#8c8480);border-radius:0 0 50% 50%/0 0 40% 60%"></div>
      <div class="a" style="left:24px;top:10px;width:20px;height:26px;background:#ecd9d1;border-radius:40%"></div>
      <div class="a" style="left:2px;top:16px;width:9px;height:30px;background:#f6f6f6"></div>
      <div class="a" style="left:14px;top:33px;width:34px;height:20px;background:#f4f3f3;border-radius:12px 10px 0 0"></div>
    </div>
    <div class="lab"><svg width="16" height="16" viewBox="0 0 16 16"><rect x="5.6" y="1.5" width="4.8" height="8.2" rx="2.4" fill="#c9cacc"/><path d="M3.2 7.2a4.8 4.8 0 0 0 9.6 0M8 12v2.2M5.4 14.4h5.2" fill="none" stroke="#c9cacc" stroke-width="1.3"/><path d="M2.2 13.6L13.6 1.6" stroke="#e8452c" stroke-width="1.5"/></svg>王文博</div>
  </div>
  <!-- tile 4 -->
  <div class="tile" style="top:362.5px">
    <div class="av" style="background:#6f97d9">
      <svg width="50" height="50" viewBox="0 0 50 50" style="left:0;top:0"><path d="M21.500 23c0-2.600 7-2.600 7 0" fill="none" stroke="#c9a58a" stroke-width="1.200"/><path d="M21.600 23.500v5c0 6 3 12 3.400 20M28.400 23.500v5c0 6-3 12-3.400 20" fill="none" stroke="#2b3345" stroke-width=".9"/><rect x="20.300" y="25" width="2.200" height="4.500" rx="1" fill="#f3c29a"/><rect x="27.500" y="25" width="2.200" height="4.500" rx="1" fill="#f3c29a"/></svg>
    </div>
    <div class="lab"><svg width="16" height="16" viewBox="0 0 16 16"><rect x="5.6" y="1.5" width="4.8" height="8.2" rx="2.4" fill="#c9cacc"/><path d="M3.2 7.2a4.8 4.8 0 0 0 9.6 0M8 12v2.2M5.4 14.4h5.2" fill="none" stroke="#c9cacc" stroke-width="1.3"/><path d="M2.2 13.6L13.6 1.6" stroke="#e8452c" stroke-width="1.5"/></svg>贝塔是谁</div>
  </div>
  <!-- tile 5 -->
  <div class="tile" style="top:470.5px">
    <div class="av" style="background:linear-gradient(90deg,#2a3038 0,#1a1c20 40%,#15161a 78%,#d9d9d6 80%,#e4e4e2 100%)">
      <div class="a" style="left:18px;top:6px;width:22px;height:16px;background:#0c0d10;border-radius:50% 50% 40% 40%"></div>
      <div class="a" style="left:24px;top:14px;width:14px;height:9px;background:#b9aaa6;border-radius:40%"></div>
      <div class="a" style="left:8px;top:22px;width:32px;height:30px;background:#0e0f12;border-radius:12px 12px 0 0"></div>
      <div class="a" style="left:0;top:10px;width:14px;height:30px;background:#323c4a;opacity:.7;border-radius:40%"></div>
    </div>
    <div class="lab" style="color:#9c9c9c;background:#0a0a0b;z-index:3;opacity:.97"><svg width="16" height="16" viewBox="0 0 16 16"><rect x="5.6" y="1.5" width="4.8" height="8.2" rx="2.4" fill="#636466"/><path d="M3.2 7.2a4.8 4.8 0 0 0 9.6 0M8 12v2.2M5.4 14.4h5.2" fill="none" stroke="#636466" stroke-width="1.3"/><path d="M2.2 13.6L13.6 1.6" stroke="#8a3b2e" stroke-width="1.5"/></svg>软件181谷天旭</div>
  </div>
  <!-- overlays -->
  <div class="a" style="left:0;top:38.5px;width:182px;height:32px;background:rgba(8,9,11,.55)"></div>
  <svg width="16" height="11" viewBox="0 0 16 11" style="left:88px;top:50px"><polygon points="8,0 15.200,10 .8,10" fill="#a3a5a7"/></svg>
  <div class="a" style="left:0;top:541px;width:182px;height:33px;background:rgba(6,7,8,.56);z-index:2"></div>
  <svg width="16" height="11" viewBox="0 0 16 11" style="left:88px;top:551.500px;z-index:4"><polygon points=".8,0 15.200,0 8,10" fill="#fff"/></svg>
</div>

</body>
</html>
